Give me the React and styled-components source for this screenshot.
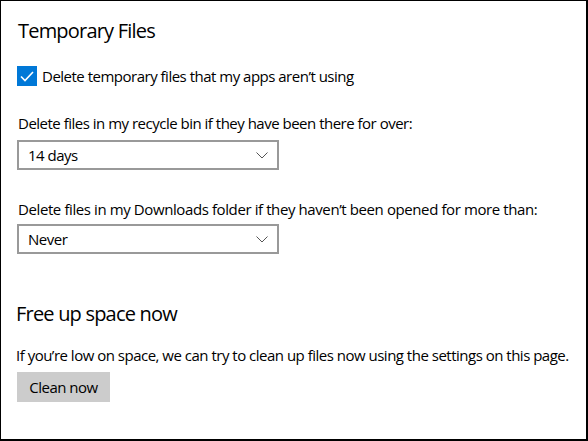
import React, { useState } from 'react';
import styled, { createGlobalStyle } from 'styled-components';

const GlobalStyle = createGlobalStyle`
  html, body {
    margin: 0;
    padding: 0;
    background: #ffffff;
  }
  body {
    font-family: 'Open Sans', 'Noto Sans', sans-serif;
    color: #000;
  }
`;

const Frame = styled.div`
  box-sizing: border-box;
  width: 588px;
  height: 441px;
  border-left: 1px solid #000;
  border-top: 1px solid #000;
  border-right: 2px solid #000;
  border-bottom: 2px solid #000;
  padding: 16px 0 0 16px;
  display: flex;
  flex-direction: column;
`;

const Heading = styled.h2`
  margin: ${p => p.$top || 0}px 0 0 ${p => p.$indent || 0}px;
  font-size: 20px;
  font-weight: 400;
  line-height: 28px;
  letter-spacing: -0.8px;
`;

const CheckRow = styled.label`
  display: flex;
  align-items: center;
  gap: 5px;
  margin-top: 21px;
  height: 20px;
  font-size: 15px;
  letter-spacing: -0.5px;
  cursor: pointer;
`;

const Box = styled.span`
  width: 20px;
  height: 20px;
  flex: none;
  background: ${p => (p.$checked ? '#0078d7' : '#fff')};
  border: ${p => (p.$checked ? 'none' : '2px solid #333')};
  box-sizing: border-box;
  display: flex;
  align-items: center;
  justify-content: center;
`;

const Label = styled.div`
  font-size: 15px;
  line-height: 20px;
  letter-spacing: ${p => p.$spacing ?? -0.5}px;
  margin-top: ${p => p.$top}px;
  margin-left: 1px;
`;

const Select = styled.div`
  box-sizing: border-box;
  width: 262px;
  height: 30px;
  margin-top: ${p => p.$top}px;
  border: 2px solid #999;
  display: flex;
  align-items: center;
  justify-content: space-between;
  padding: 0 9px 0 9px;
  font-size: 15px;
  letter-spacing: -0.5px;
`;

const Para = styled.p`
  margin: 17px 0 0 -1px;
  font-size: 15px;
  line-height: 20px;
  letter-spacing: -0.5px;
  white-space: nowrap;
`;

const Button = styled.button`
  align-self: flex-start;
  margin-top: 7px;
  width: 93px;
  height: 30px;
  border: none;
  background: #cccccc;
  font-family: inherit;
  font-size: 15px;
  letter-spacing: -0.5px;
  color: #000;
  padding: 0;
`;

const Chevron = () => (
  <svg width="12" height="7" viewBox="0 0 12 7" fill="none" stroke="#555" strokeWidth="1">
    <polyline points="0.5 0.5 6 6 11.5 0.5" />
  </svg>
);

export default function App() {
  const [checked, setChecked] = useState(true);
  return (
    <>
      <GlobalStyle />
      <Frame>
        <Heading $indent={1}>Temporary Files</Heading>
        <CheckRow onClick={() => setChecked(!checked)}>
          <Box $checked={checked}>
            {checked && (
              <svg width="14" height="11" viewBox="0 0 14 11" fill="none" stroke="#fff" strokeWidth="1.6">
                <polyline points="1 5.5 5 9.5 13 1" />
              </svg>
            )}
          </Box>
          Delete temporary files that my apps aren’t using
        </CheckRow>
        <Label $top={27}>Delete files in my recycle bin if they have been there for over:</Label>
        <Select $top={7}>
          <span>14 days</span>
          <Chevron />
        </Select>
        <Label $top={29} $spacing={-0.4}>Delete files in my Downloads folder if they haven’t been opened for more than:</Label>
        <Select $top={5}>
          <span>Never</span>
          <Chevron />
        </Select>
        <Heading $top={46} $indent={-1}>Free up space now</Heading>
        <Para>If you’re low on space, we can try to clean up files now using the settings on this page.</Para>
        <Button>Clean now</Button>
      </Frame>
    </>
  );
}
